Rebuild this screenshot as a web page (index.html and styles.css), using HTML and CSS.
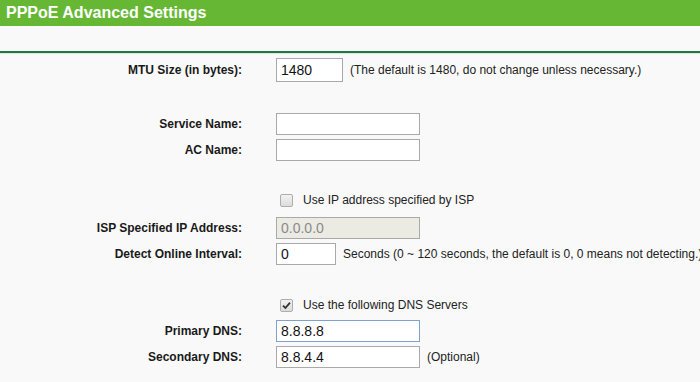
FILE: index.html
```html
<!DOCTYPE html>
<html lang="en">
	<head>
		<meta charset="UTF-8" />
		<meta name="viewport" content="width=device-width, initial-scale=1.0" />
		<title>PPPoE Advanced Settings</title>
		<link rel="stylesheet" href="styles.css">
	</head>
	<body>
		<div class="title">PPPoE Advanced Settings</div>
		<div class="rule"></div>

		<form class="form">
			<div class="row">
				<label class="label" for="mtu">MTU Size (in bytes):</label>
				<input class="field mtu" id="mtu" type="text" value="1480" />
				<span class="note">(The default is 1480, do not change unless necessary.)</span>
			</div>

			<div class="row gap-top">
				<label class="label" for="service">Service Name:</label>
				<input class="field wide" id="service" type="text" />
			</div>
			<div class="row">
				<label class="label" for="ac">AC Name:</label>
				<input class="field wide" id="ac" type="text" />
			</div>

			<div class="row gap-mid">
				<span class="label"></span>
				<label class="check">
					<span class="box"></span>
					Use IP address specified by ISP
				</label>
			</div>
			<div class="row tight">
				<label class="label" for="ispip">ISP Specified IP Address:</label>
				<input class="field wide" id="ispip" type="text" value="0.0.0.0" disabled />
			</div>
			<div class="row">
				<label class="label" for="interval">Detect Online Interval:</label>
				<input class="field short" id="interval" type="text" value="0" />
				<span class="note">Seconds (0 ~ 120 seconds, the default is 0, 0 means not detecting.)</span>
			</div>

			<div class="row gap-low">
				<span class="label"></span>
				<label class="check">
					<span class="box">
						<svg width="9" height="9" viewBox="0 0 9 9"><path d="M1 4.6 L3.4 7 L8 1.6" fill="none" stroke="#333" stroke-width="1.8" /></svg>
					</span>
					Use the following DNS Servers
				</label>
			</div>
			<div class="row">
				<label class="label" for="dns1">Primary DNS:</label>
				<input class="field wide focus" id="dns1" type="text" value="8.8.8.8" />
			</div>
			<div class="row">
				<label class="label" for="dns2">Secondary DNS:</label>
				<input class="field wide" id="dns2" type="text" value="8.8.4.4" />
				<span class="note">(Optional)</span>
			</div>
		</form>
	</body>
</html>
```

FILE: styles.css
```css
body {
	margin: 0;
	background: #f9f9f9;
	font-family: "Liberation Sans", Arial, sans-serif;
	color: #222;
	overflow: hidden;
}

.title {
	height: 26px;
	line-height: 26px;
	padding-left: 6px;
	background: #66b834;
	color: #fff;
	font-size: 16px;
	font-weight: bold;
}

.rule {
	height: 25px;
	border-bottom: 2px solid #23793a;
	box-shadow: 0 1px 0 #d6e4ee;
}

.form {
	padding-top: 4px;
}

.row {
	display: flex;
	align-items: center;
	height: 26px;
}

.gap-top {
	margin-top: 28px;
}

.gap-mid {
	margin-top: 24px;
}

.tight {
	margin-top: 2px;
}

.gap-low {
	margin-top: 25px;
}

.label {
	box-sizing: border-box;
	flex: none;
	width: 276px;
	padding-right: 34px;
	text-align: right;
	font-size: 12px;
	font-weight: bold;
	color: #1a1a1a;
}

.field {
	box-sizing: border-box;
	height: 22px;
	margin: 0;
	padding: 0 4px;
	border: 1px solid #a9a9a9;
	border-radius: 0;
	background: #fff;
	font-family: "Liberation Sans", Arial, sans-serif;
	font-size: 14px;
	color: #111;
	outline: none;
}

.mtu {
	width: 67px;
	height: 24px;
}

.wide {
	width: 144px;
}

.short {
	width: 60px;
}

.field:disabled {
	background: #ebebe4;
	color: #8a8a8a;
}

.focus {
	border-color: #7da2ce;
}

.note {
	margin-left: 7px;
	font-size: 12px;
	white-space: nowrap;
}

.check {
	display: flex;
	align-items: center;
	font-size: 12px;
	padding-left: 4px;
}

.box {
	box-sizing: border-box;
	display: flex;
	justify-content: center;
	align-items: center;
	width: 13px;
	height: 13px;
	margin-right: 10px;
	border: 1px solid #adadad;
	border-radius: 2px;
	background: linear-gradient(#f2f2f2, #dcdcdc);
}
```
